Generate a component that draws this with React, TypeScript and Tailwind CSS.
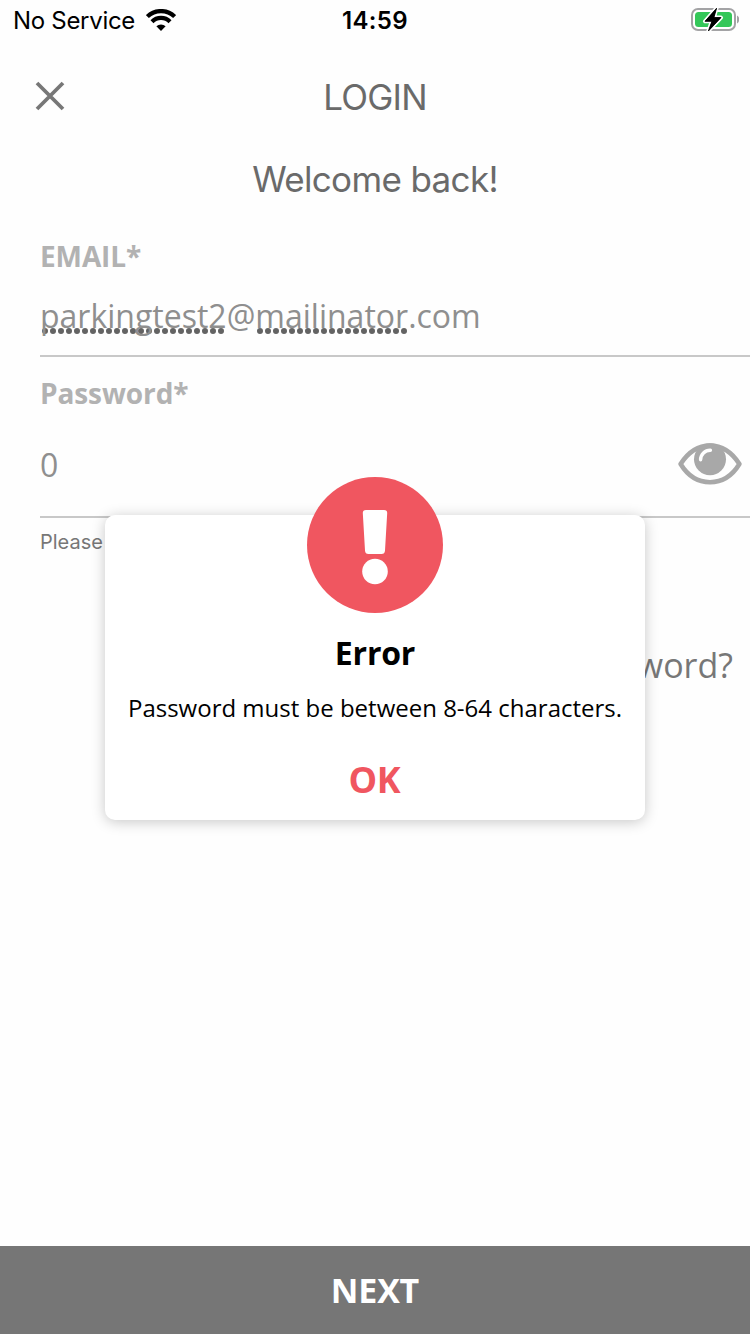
import React from "react";

function WifiIcon() {
  return (
    <svg width="30" height="22" viewBox="0 0 30 22" className="mb-[2px] block">
      <g fill="none" stroke="#000" strokeWidth="4.2">
        <path d="M1.4 7.6A19.4 19.4 0 0 1 28.6 7.6" />
        <path d="M6 12.7A12.6 12.6 0 0 1 24 12.7" />
      </g>
      <path d="M15 22L10.4 17.3A6.6 6.6 0 0 1 19.6 17.3Z" />
    </svg>
  );
}

function BatteryIcon() {
  return (
    <svg width="48" height="26" viewBox="0 0 48 26" className="mb-[2px] block">
      <rect x="1" y="2" width="43" height="21" rx="6" fill="#fff" stroke="#a3a3a5" strokeWidth="2" />
      <path d="M46 8.600c3 1.200 3 6.600 0 7.800z" fill="#a3a3a5" />
      <rect x="4" y="5" width="37" height="15" rx="3.500" fill="#34c759" />
      <path
        d="M25.600 1.200L14 14.300H20.900L17.400 24L30 10.600H22.900Z"
        fill="#000"
        stroke="#fff"
        strokeWidth="4"
        strokeLinejoin="round"
        paintOrder="stroke"
      />
      <path d="M25.600 1.200L14 14.300H20.900L17.400 24L30 10.600H22.900Z" fill="#000" stroke="#000" strokeWidth="0.800" />
    </svg>
  );
}

function EyeIcon() {
  return (
    <svg width="64" height="42" viewBox="0 0 64 42" className="mb-[2px] block">
      <path
        d="M2.600 21C9 11 19 2.600 32 2.600S55 11 61.400 21C55 31.500 45 39.200 32 39.200S9 31.500 2.600 21Z"
        fill="none"
        stroke="#a8a8a8"
        strokeWidth="4.600"
        strokeLinejoin="round"
      />
      <circle cx="32" cy="16.300" r="16" fill="#a8a8a8" />
      <path d="M22.600 16.800A9.600 9.600 0 0 1 32.400 7.200" fill="none" stroke="#fff" strokeWidth="3.400" strokeLinecap="round" />
    </svg>
  );
}

function AlertIcon() {
  return (
    <svg width="136" height="136" viewBox="0 0 136 136" className="block">
      <circle cx="68" cy="68" r="68" fill="#f05660" />
      <path
        d="M59 33H77Q80.300 33 80.200 36L78 73.500Q77.800 77 74.500 77H61.500Q58.200 77 58 73.500L55.800 36Q55.700 33 59 33Z"
        fill="#fff"
      />
      <circle cx="68" cy="94.500" r="12.800" fill="#fff" />
    </svg>
  );
}

function SpellingDots() {
  return (
    <svg width="370" height="6" viewBox="0 0 370 6" className="absolute left-0 top-[52px]">
      <g stroke="#636363" strokeWidth="6" strokeLinecap="round">
        <path d="M5 3H181.100" strokeDasharray="0 8" />
        <path d="M220 3H364.100" strokeDasharray="0 8" />
      </g>
    </svg>
  );
}

function StatusBar() {
  return (
    <div className="grid h-10 grid-cols-3 items-center font-['Inter',sans-serif] text-[24px] leading-10 text-black">
      <div className="flex items-center gap-[11px] pl-[13px]">
        <span className="pt-px tracking-[-0.3px]">No Service</span>
        <WifiIcon />
      </div>
      <div className="pt-px text-center font-semibold tracking-[0.4px]">14:59</div>
      <div className="flex justify-end pr-[11px]">
        <BatteryIcon />
      </div>
    </div>
  );
}

function ErrorDialog() {
  return (
    <div
      role="alertdialog"
      className="absolute left-[105px] top-[515px] flex h-[305px] w-[540px] flex-col items-center rounded-[10px] bg-white pt-[117px] text-black shadow-[0_2px_14px_rgba(0,0,0,0.22)]"
    >
      <div className="absolute left-[202px] top-[-38px]">
        <AlertIcon />
      </div>
      <h2 className="text-[32px] font-bold leading-[41px] tracking-[-0.2px]">Error</h2>
      <p className="mt-[14px] whitespace-nowrap text-[24px] leading-[41px]">
        Password must be between 8-64 characters.
      </p>
      <button className="mt-[22px] pr-px text-[36px] font-bold leading-[60px] tracking-[-0.4px] text-[#f05660]">OK</button>
    </div>
  );
}

export default function App() {
  return (
    <div className="relative flex h-[1334px] w-[750px] flex-col overflow-hidden bg-[#fefefe] font-['Open_Sans',sans-serif]">
      <StatusBar />
      <header className="grid h-[113px] grid-cols-3 items-center font-['Inter',sans-serif]">
        <button className="pb-px pl-[35px]" aria-label="Close">
          <svg width="30" height="30" viewBox="0 0 30 30" className="block">
            <path d="M2 2L28 28M28 2L2 28" stroke="#777" strokeWidth="3.800" />
          </svg>
        </button>
        <h1 className="pt-[2px] text-center text-[35px] tracking-[-0.8px] text-[#6a6a6a]">LOGIN</h1>
      </header>
      <p className="h-[51px] text-center font-['Inter',sans-serif] text-[35px] leading-[53px] tracking-[-0.65px] text-[#6a6a6a]">
        Welcome back!
      </p>
      <main className="flex grow flex-col pl-10">
        <label className="mt-8 text-[28px] font-bold leading-10 tracking-[-0.1px] text-[#b2b2b2]">EMAIL*</label>
        <div className="relative h-[81px] border-b-2 border-[#c8c8c8] text-[32px] leading-[79px] text-[#8f8f8f]">
          <SpellingDots />
          <span className="relative">parkingtest2@mailinator.com</span>
        </div>
        <label className="mt-4 text-[28px] font-bold leading-10 tracking-[-0.1px] text-[#b2b2b2]">Password*</label>
        <div className="flex h-[105px] items-center justify-between border-b-2 border-[#c8c8c8] pr-2 text-[32px] text-[#8f8f8f]">
          <span className="pt-px">0</span>
          <EyeIcon />
        </div>
        <p className="font-['Inter',sans-serif] text-[20px] leading-[48px] text-[#777]">Please</p>
        <a className="mt-[69px] pr-[17px] text-right text-[34px] leading-[60px] text-[#777]">Forgot password?</a>
      </main>
      <button className="h-[88px] w-full bg-[#767676] text-[34px] font-bold tracking-[-0.2px] text-white">NEXT</button>
      <ErrorDialog />
    </div>
  );
}
